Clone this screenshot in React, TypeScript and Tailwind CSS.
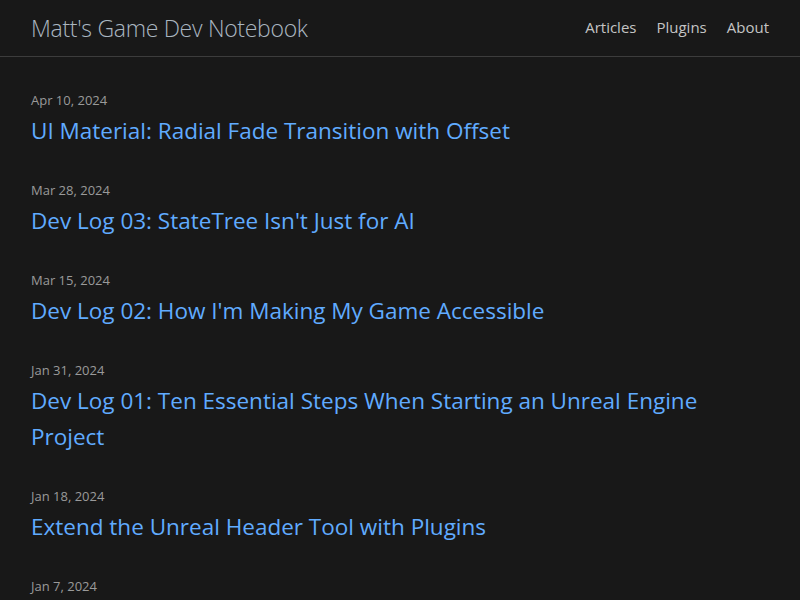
const posts = [
  { date: "Apr 10, 2024", title: "UI Material: Radial Fade Transition with Offset" },
  { date: "Mar 28, 2024", title: "Dev Log 03: StateTree Isn't Just for AI" },
  { date: "Mar 15, 2024", title: "Dev Log 02: How I'm Making My Game Accessible" },
  { date: "Jan 31, 2024", title: "Dev Log 01: Ten Essential Steps When Starting an Unreal Engine Project" },
  { date: "Jan 18, 2024", title: "Extend the Unreal Header Tool with Plugins" },
  { date: "Jan 7, 2024", title: "" },
];

export default function App() {
  return (
    <main className="min-h-screen bg-[#181818] font-['Open_Sans',sans-serif]">
      {/* Header */}
      <header className="h-[57px] border-b border-[#3c3c3c] flex items-center justify-between px-[31px]">
        <a className="text-[23px] font-light text-[#aab6c0] tracking-[-0.3px]">Matt's Game Dev Notebook</a>
        <nav className="flex gap-5 text-[15px] text-[#c4c4c4] -mt-[2px]">
          <a>Articles</a>
          <a>Plugins</a>
          <a>About</a>
        </nav>
      </header>

      {/* Posts */}
      <div className="px-[31px] pt-[33px] flex flex-col gap-[31px]">
        {posts.map(p => (
          <div key={p.date}>
            <div className="text-[13px] leading-[20px] text-[#9a9a9a]">{p.date}</div>
            {p.title && (
              <a className="block mt-[3px] text-[22.5px] leading-[36px] text-[#60abff] max-w-[700px]">{p.title}</a>
            )}
          </div>
        ))}
      </div>
    </main>
  );
}
